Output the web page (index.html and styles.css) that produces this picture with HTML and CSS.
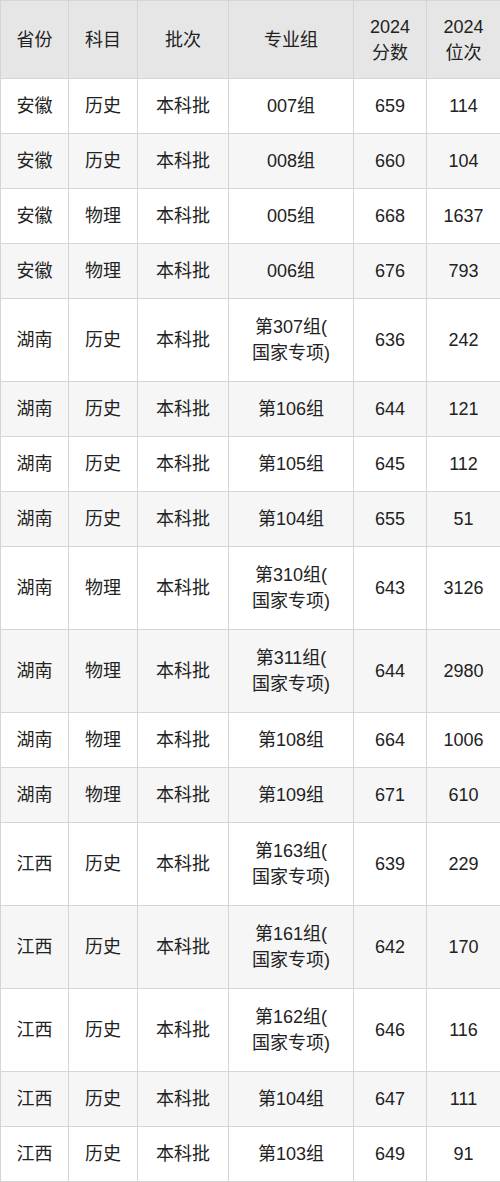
FILE: index.html
```html
<!DOCTYPE html>
<html lang="zh">
<head>
<meta charset="utf-8">
<link rel="stylesheet" href="styles.css">
</head>
<body>
<table class="grid">
<colgroup>
<col class="c1"><col class="c2"><col class="c3"><col class="c4"><col class="c5"><col class="c6">
</colgroup>
<thead>
<tr><th>省份</th><th>科目</th><th>批次</th><th>专业组</th><th>2024<br>分数</th><th>2024<br>位次</th></tr>
</thead>
<tbody>
<tr><td>安徽</td><td>历史</td><td>本科批</td><td>007组</td><td>659</td><td>114</td></tr>
<tr><td>安徽</td><td>历史</td><td>本科批</td><td>008组</td><td>660</td><td>104</td></tr>
<tr><td>安徽</td><td>物理</td><td>本科批</td><td>005组</td><td>668</td><td>1637</td></tr>
<tr><td>安徽</td><td>物理</td><td>本科批</td><td>006组</td><td>676</td><td>793</td></tr>
<tr class="tall"><td>湖南</td><td>历史</td><td>本科批</td><td>第307组(<br>国家专项)</td><td>636</td><td>242</td></tr>
<tr><td>湖南</td><td>历史</td><td>本科批</td><td>第106组</td><td>644</td><td>121</td></tr>
<tr><td>湖南</td><td>历史</td><td>本科批</td><td>第105组</td><td>645</td><td>112</td></tr>
<tr><td>湖南</td><td>历史</td><td>本科批</td><td>第104组</td><td>655</td><td>51</td></tr>
<tr class="tall"><td>湖南</td><td>物理</td><td>本科批</td><td>第310组(<br>国家专项)</td><td>643</td><td>3126</td></tr>
<tr class="tall"><td>湖南</td><td>物理</td><td>本科批</td><td>第311组(<br>国家专项)</td><td>644</td><td>2980</td></tr>
<tr><td>湖南</td><td>物理</td><td>本科批</td><td>第108组</td><td>664</td><td>1006</td></tr>
<tr><td>湖南</td><td>物理</td><td>本科批</td><td>第109组</td><td>671</td><td>610</td></tr>
<tr class="tall"><td>江西</td><td>历史</td><td>本科批</td><td>第163组(<br>国家专项)</td><td>639</td><td>229</td></tr>
<tr class="tall"><td>江西</td><td>历史</td><td>本科批</td><td>第161组(<br>国家专项)</td><td>642</td><td>170</td></tr>
<tr class="tall"><td>江西</td><td>历史</td><td>本科批</td><td>第162组(<br>国家专项)</td><td>646</td><td>116</td></tr>
<tr><td>江西</td><td>历史</td><td>本科批</td><td>第104组</td><td>647</td><td>111</td></tr>
<tr><td>江西</td><td>历史</td><td>本科批</td><td>第103组</td><td>649</td><td>91</td></tr>
</tbody>
</table>
</body>
</html>
```
FILE: styles.css
```css
html, body {
  margin: 0;
  padding: 0;
  background: #ffffff;
}
body {
  font-family: "Liberation Sans", "Noto Sans CJK SC", sans-serif;
  font-size: 18px;
  color: #222222;
}
.grid {
  width: 500px;
  table-layout: fixed;
  border-collapse: collapse;
}
.c1 { width: 68px; }
.c2 { width: 69px; }
.c3 { width: 91px; }
.c4 { width: 125px; }
.c5 { width: 73px; }
.c6 { width: 74px; }
.grid th, .grid td {
  border: 1px solid #d5d5d5;
  text-align: center;
  vertical-align: middle;
  line-height: 26px;
  padding: 0 2px;
  font-weight: normal;
}
.grid th {
  background: #e6e6e6;
  height: 77px;
}
.grid td {
  height: 54px;
}
.grid tr.tall td {
  height: 82px;
}
.grid tbody tr:nth-child(even) td {
  background: #f6f6f6;
}
```
